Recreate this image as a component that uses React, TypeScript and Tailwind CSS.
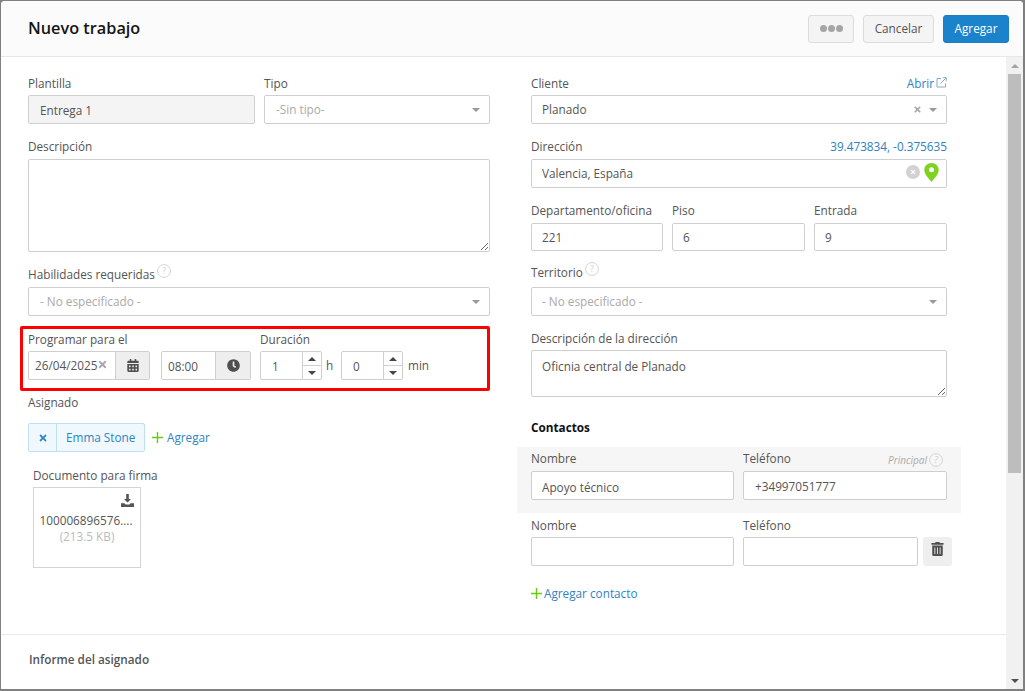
import React from "react";
import { FaCalendarAlt, FaClock, FaTrashAlt, FaTimes } from "react-icons/fa";

const inputCls =
  "block w-full min-w-0 border border-[#cfcfcf] rounded-[2px] bg-white px-[10px] text-[11.75px] text-[#555] outline-none";

function Label({ children, className = "" }: { children?: React.ReactNode; className?: string }) {
  return <div className={"h-[18px] leading-[18px] text-[11.75px] text-[#555] whitespace-nowrap " + className}>{children}</div>;
}

function Help({ size = 14 }: { size?: number }) {
  return (
    <svg width={size} height={size} viewBox="0 0 14 14" className="shrink-0">
      <circle cx="7" cy="7" r="6.4" fill="none" stroke="#d4d4d4" strokeWidth="1" />
      <text x="7" y="10.2" textAnchor="middle" fontSize="9" fill="#cfcfcf" fontFamily="Open Sans">?</text>
    </svg>
  );
}

function Caret({ color = "#999999" }: { color?: string }) {
  return (
    <svg width="8" height="4" viewBox="0 0 8 4" className="shrink-0">
      <path d="M0 0h8L4 4z" fill={color} />
    </svg>
  );
}

function Plus() {
  return (
    <svg width="11" height="11" viewBox="0 0 11 11" className="shrink-0">
      <path d="M4.8 0h1.4v4.8H11v1.4H6.2V11H4.8V6.2H0V4.8h4.8z" fill="#66cc14" />
    </svg>
  );
}

function Select({ text, muted, clear, pad = "pl-[11px]" }: { text: string; muted?: boolean; clear?: boolean; pad?: string }) {
  return (
    <div className={"h-[29px] flex items-center border border-[#cfcfcf] rounded-[2px] bg-white pr-[9px] text-[11.75px] " + pad}>
      <span className={"flex-1 " + (muted ? "text-[#aaa]" : "text-[#555]")}>{text}</span>
      {clear && <FaTimes className="text-[#a8a8a8] w-[9px] h-[9px] mr-[7px]" />}
      <Caret />
    </div>
  );
}

function Spinner({ value, label, labelClass }: { value: string; label: string; labelClass: string }) {
  return (
    <>
      <div className="w-[62px] h-[29px] flex border border-[#cfcfcf] rounded-[2px] bg-white">
        <div className="flex-1 pl-[11px] leading-[28px] text-[11.75px] text-[#555]">{value}</div>
        <div className="w-[19px] border-l border-[#cfcfcf] flex flex-col">
          <div className="flex-1 flex items-center justify-center border-b border-[#cfcfcf]">
            <svg width="8" height="4" viewBox="0 0 8 4"><path d="M0 4h8L4 0z" fill="#444" /></svg>
          </div>
          <div className="flex-1 flex items-center justify-center">
            <svg width="8" height="4" viewBox="0 0 8 4"><path d="M0 0h8L4 4z" fill="#444" /></svg>
          </div>
        </div>
      </div>
      <span className={"text-[11.75px] text-[#555] " + labelClass}>{label}</span>
    </>
  );
}

export default function App() {
  return (
    <div
      className="h-[691px] w-[1025px] overflow-hidden bg-[#808080] pt-[1px] pl-[1px] pr-[2px] pb-[2px] text-[#555]"
      style={{ fontFamily: '"Open Sans", sans-serif' }}
    >
      <div className="h-[688px] flex flex-col bg-white rounded-t-[4px] overflow-hidden">
        {/* Header */}
        <div className="h-[56px] shrink-0 flex items-center bg-[#fbfbfb] border-b border-[#e7e7e7] pl-[27px] pr-[14px]">
          <h1 className="flex-1 text-[16.3px] leading-[24px] font-semibold text-[#151515] -mt-[1px]">Nuevo trabajo</h1>
          <button className="w-[46px] h-[28px] flex items-center justify-center gap-[1px] bg-[#f4f4f4] border border-[#dcdcdc] rounded-[3px]">
            <span className="w-[7px] h-[7px] rounded-full bg-[#a5a5a5]" />
            <span className="w-[7px] h-[7px] rounded-full bg-[#a5a5a5]" />
            <span className="w-[7px] h-[7px] rounded-full bg-[#a5a5a5]" />
          </button>
          <button className="ml-[9px] w-[71px] h-[28px] bg-[#f4f4f4] border border-[#dcdcdc] rounded-[3px] text-[11.75px] text-[#555]">Cancelar</button>
          <button className="ml-[9px] w-[66px] h-[28px] bg-[#1b82cc] border border-[#1b7ec6] rounded-[3px] text-[11.75px] text-white">Agregar</button>
        </div>

        <div className="flex-1 min-h-0 flex">
          <div className="flex-1 min-w-0 flex flex-col">
            {/* Form */}
            <div className="h-[578px] shrink-0 flex pl-[27px] pt-[17px] border-b border-[#e9e9e9]">
              {/* Left column */}
              <div className="w-[462px] shrink-0">
                <div className="grid grid-cols-[227px_226px] gap-x-[9px]">
                  <div>
                    <Label className="mb-[3px]">Plantilla</Label>
                    <div className="h-[29px] leading-[29px] border border-[#cfcfcf] rounded-[2px] bg-[#f4f4f4] px-[11px] text-[11.75px] text-[#555]">Entrega 1</div>
                  </div>
                  <div>
                    <Label className="mb-[3px]">Tipo</Label>
                    <Select text="-Sin tipo-" muted />
                  </div>
                </div>

                <Label className="mt-[13px] mb-[4px]">Descripción</Label>
                <textarea className={inputCls + " h-[93px]"} readOnly />

                <Label className="mt-[13px] mb-[4px] flex items-start gap-[2px]">
                  <span>Habilidades requeridas</span>
                  <span className="-mt-[1px]"><Help /></span>
                </Label>
                <Select text="- No especificado -" muted />

                {/* Highlighted row */}
                <div className="mt-[10px] -ml-[8px] w-[470px] h-[65px] border-[3px] border-[#ff0000] rounded-[2px] pl-[5px] pt-[1px]">
                  <div className="flex">
                    <div className="w-[232px] shrink-0">
                      <Label className="mb-[3px]">Programar para el</Label>
                      <div className="flex">
                        <div className="w-[122px] h-[29px] flex border border-[#cfcfcf] rounded-[2px] bg-white">
                          <div className="flex-1 flex items-center pl-[6px] text-[11.75px] text-[#555]">
                            26/04/2025
                            <FaTimes className="text-[#a8a8a8] w-[11px] h-[11px] ml-[0px] -mt-[2px]" />
                          </div>
                          <div className="w-[34px] border-l border-[#cfcfcf] bg-[#eeeeee] flex items-center justify-center">
                            <FaCalendarAlt className="w-[12px] h-[13px] text-[#4f4f4f]" />
                          </div>
                        </div>
                        <div className="ml-[11px] w-[90px] h-[29px] flex border border-[#cfcfcf] rounded-[2px] bg-white">
                          <div className="flex-1 pl-[6px] leading-[28px] text-[11.75px] text-[#555]">08:00</div>
                          <div className="w-[35px] border-l border-[#cfcfcf] bg-[#eeeeee] flex items-center justify-center">
                            <FaClock className="w-[13px] h-[13px] text-[#4f4f4f]" />
                          </div>
                        </div>
                      </div>
                    </div>
                    <div>
                      <Label className="mb-[3px]">Duración</Label>
                      <div className="flex items-center">
                        <Spinner value="1" label="h" labelClass="ml-[4px] w-[15px]" />
                        <Spinner value="0" label="min" labelClass="ml-[5px]" />
                      </div>
                    </div>
                  </div>
                </div>

                <Label className="mt-[2px]">Asignado</Label>
                <div className="mt-[12px] flex items-center">
                  <div className="h-[29px] w-[117px] flex border border-[#bfe0f2] rounded-[2px] bg-[#f0f8fd] text-[11.75px] text-[#2a86c5]">
                    <div className="w-[28px] border-r border-[#bfe0f2] flex items-center justify-center">
                      <FaTimes className="w-[10px] h-[10px] text-[#2a86c5]" />
                    </div>
                    <div className="flex-1 pl-[9px] leading-[27px]">Emma Stone</div>
                  </div>
                  <div className="ml-[7px]"><Plus /></div>
                  <span className="ml-[4px] text-[11.75px] text-[#2f83c4]">Agregar</span>
                </div>

                <div className="ml-[5px]">
                  <Label className="mt-[14px] mb-[3px]">Documento para firma</Label>
                  <div className="w-[108px] h-[81px] border border-[#d4d4d4] flex flex-col items-center">
                    <div className="self-end mt-[6px] mr-[6px] h-[14px]">
                      <svg width="13" height="13" viewBox="0 0 13 13">
                        <path d="M5.2 0h2.6v5H10L6.5 8.6 3 5h2.2z" fill="#555" />
                        <path d="M0 9.2h3.4l1.2 1.2h3.8l1.2-1.2H13V13H0z" fill="#555" />
                      </svg>
                    </div>
                    <div className="mt-[4px] -ml-[2px] h-[16px] leading-[16px] text-[11.75px] text-[#555] whitespace-nowrap">100006896576....</div>
                    <div className="h-[16px] leading-[16px] text-[11.75px] text-[#bbb]">(213.5 KB)</div>
                  </div>
                </div>
              </div>

              {/* Right column */}
              <div className="w-[416px] shrink-0 ml-[41px]">
                <Label className="mb-[3px] flex justify-between">
                  <span>Cliente</span>
                  <span className="flex items-start gap-[2px] text-[#2f83c4]">
                    Abrir
                    <svg width="11" height="11" viewBox="0 0 11 11" fill="none" stroke="#8aa9c4" strokeWidth="1" className="mt-[3px]">
                      <path d="M5 1.5H1v8.5h8.5V6.5" />
                      <path d="M4.5 6.5 10 1M6.8.7h3.5v3.5" />
                    </svg>
                  </span>
                </Label>
                <Select text="Planado" clear pad="pl-[10px]" />

                <Label className="mt-[13px] mb-[4px] flex justify-between">
                  <span>Dirección</span>
                  <span className="text-[#2f7fbb]">39.473834, -0.375635</span>
                </Label>
                <div className="h-[29px] flex items-center border border-[#cfcfcf] rounded-[2px] bg-white pl-[10px] pr-[7px] text-[11.75px] text-[#555]">
                  <span className="flex-1 leading-[29px]">Valencia, España</span>
                  <svg width="14" height="14" viewBox="0 0 14 14" className="-mt-[3px] mr-[4px]">
                    <circle cx="7" cy="7" r="7" fill="#d2d2d2" />
                    <path d="M5 5l4 4M9 5l-4 4" stroke="#fff" strokeWidth="1.2" />
                  </svg>
                  <svg width="15" height="19" viewBox="0 0 15 19" className="-mt-[3px]">
                    <path d="M7.5 0C3.4 0 .3 3 .3 7c0 4.4 4.4 8.2 7.2 12 2.8-3.8 7.2-7.6 7.2-12 0-4-3.1-7-7.2-7z" fill="#7ed321" />
                    <circle cx="7.5" cy="6.8" r="2.5" fill="#fff" />
                  </svg>
                </div>

                <div className="mt-[13px] grid grid-cols-[132px_133px_133px] gap-x-[9px]">
                  {[["Departamento/oficina", "221"], ["Piso", "6"], ["Entrada", "9"]].map(([l, v]) => (
                    <div key={l}>
                      <Label className="mb-[4px]">{l}</Label>
                      <input readOnly value={v} className={inputCls + " h-[28px]"} />
                    </div>
                  ))}
                </div>

                <Label className="mt-[12px] mb-[6px] flex items-start gap-[2px]">
                  <span>Territorio</span>
                  <span className="-mt-[1px]"><Help /></span>
                </Label>
                <Select text="- No especificado -" muted pad="pl-[10px]" />

                <Label className="mt-[13px] mb-[3px]">Descripción de la dirección</Label>
                <textarea readOnly value="Oficnia central de Planado" className={inputCls + " h-[47px] pt-[6px] leading-[18px]"} />

                <div className="mt-[21px] h-[18px] leading-[18px] text-[11.75px] font-bold text-[#111]">Contactos</div>

                <div className="mt-[11px] -mx-[14px] h-[66px] bg-[#f6f6f6] px-[14px] pt-[2px]">
                  <div className="grid grid-cols-[203px_204px] gap-x-[9px]">
                    <div>
                      <Label className="mb-[4px]">Nombre</Label>
                      <input readOnly value="Apoyo técnico" className={inputCls + " h-[29px] pt-[2px]"} />
                    </div>
                    <div>
                      <Label className="mb-[4px] flex justify-between pr-[4px]">
                        <span>Teléfono</span>
                        <span className="flex items-center gap-[2px] italic text-[10px] text-[#aaa] mt-[3px]">Principal <Help /></span>
                      </Label>
                      <input readOnly value="+34997051777" className={inputCls + " h-[29px] pt-[1px] pl-[11px]"} />
                    </div>
                  </div>
                </div>

                <div className="mt-[3px] flex">
                  <div className="w-[203px] shrink-0">
                    <Label className="mb-[3px]">Nombre</Label>
                    <input readOnly className={inputCls + " h-[29px]"} />
                  </div>
                  <div className="w-[175px] shrink-0 ml-[9px]">
                    <Label className="mb-[3px]">Teléfono</Label>
                    <input readOnly className={inputCls + " h-[29px]"} />
                  </div>
                  <div className="ml-[5px] mt-[21px] w-[29px] h-[29px] shrink-0 bg-[#efefef] rounded-[3px] flex items-start justify-center pt-[5px]">
                    <FaTrashAlt className="w-[13px] h-[14px] text-[#4f4f4f]" />
                  </div>
                </div>

                <div className="mt-[18px] h-[18px] flex items-center gap-[2px] text-[11.75px] text-[#2f83c4]">
                  <Plus /> <span className="leading-[18px]">Agregar contacto</span>
                </div>
              </div>
            </div>

            {/* Footer section */}
            <div className="pl-[28px] pt-[15px] text-[11.75px] leading-[18px] font-semibold text-[#555]">Informe del asignado</div>
          </div>

          {/* Scrollbar */}
          <div className="w-[17px] shrink-0 bg-[#f1f1f1] flex flex-col items-center">
            <div className="h-[17px] flex items-center justify-center">
              <svg width="8" height="4" viewBox="0 0 8 4"><path d="M0 4h8L4 0z" fill="#a3a3a3" /></svg>
            </div>
            <div className="w-[13px] h-[399px] bg-[#bdbdbd]" />
            <div className="mt-auto h-[17px] flex items-center justify-center">
              <svg width="8" height="4" viewBox="0 0 8 4"><path d="M0 0h8L4 4z" fill="#505050" /></svg>
            </div>
          </div>
        </div>
      </div>
    </div>
  );
}
